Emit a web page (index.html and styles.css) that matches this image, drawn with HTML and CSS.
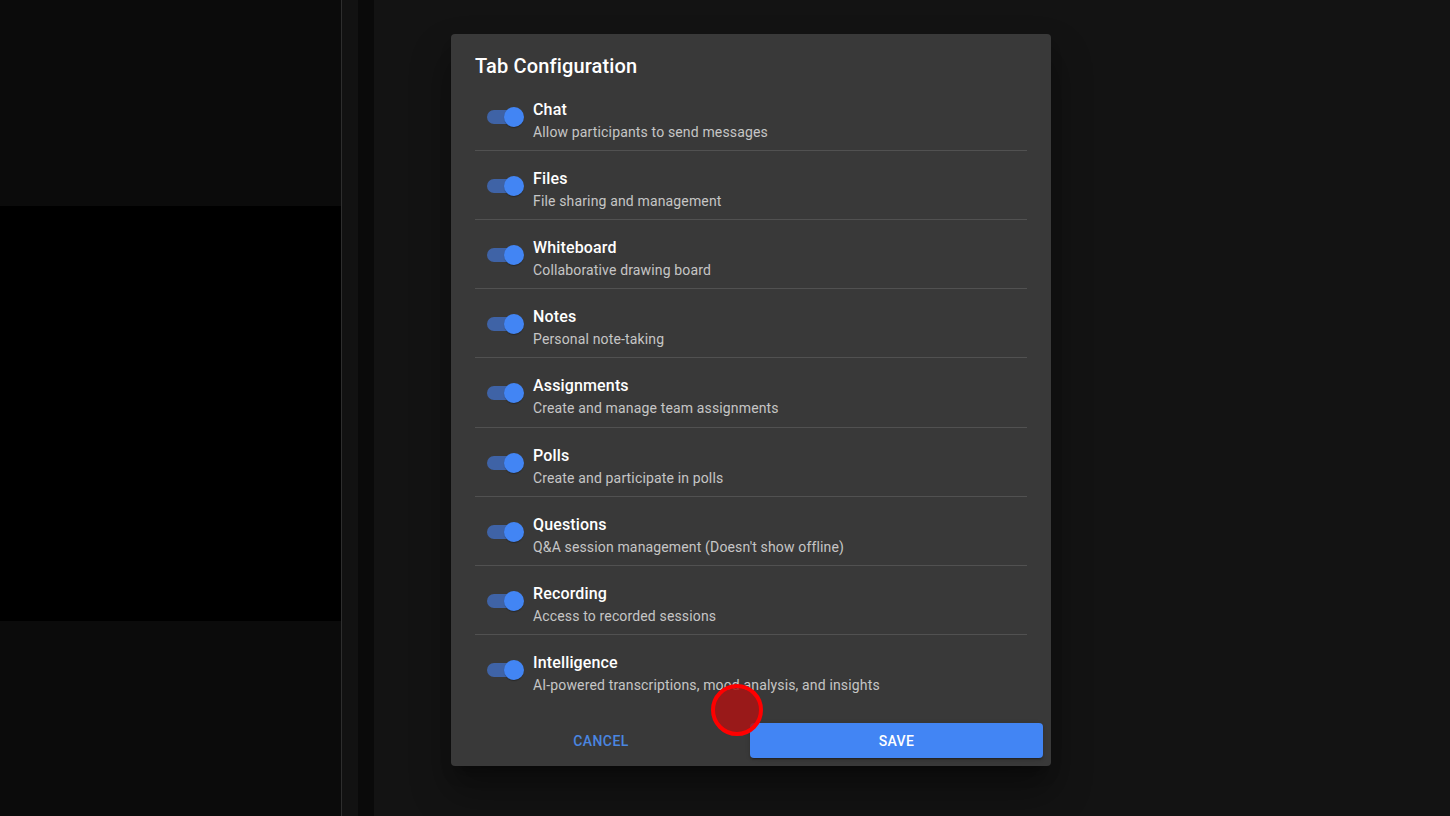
FILE: index.html
```html
<!DOCTYPE html>
<html>
<head>
<meta charset="utf-8">
<link rel="stylesheet" href="styles.css">
</head>
<body>
<div class="app">
  <aside class="side">
    <div class="side-top"></div>
    <div class="side-video"></div>
    <div class="side-bottom"></div>
  </aside>
  <div class="strip-a"></div>
  <div class="strip-b"></div>
  <main class="main"></main>
</div>

<div class="dialog">
  <h2 class="dialog-title">Tab Configuration</h2>
  <ul class="list">
    <li class="item"><span class="switch"><span class="track"></span><span class="thumb"></span></span><div class="text"><div class="name">Chat</div><div class="desc">Allow participants to send messages</div></div></li>
    <li class="item"><span class="switch"><span class="track"></span><span class="thumb"></span></span><div class="text"><div class="name">Files</div><div class="desc">File sharing and management</div></div></li>
    <li class="item"><span class="switch"><span class="track"></span><span class="thumb"></span></span><div class="text"><div class="name">Whiteboard</div><div class="desc">Collaborative drawing board</div></div></li>
    <li class="item"><span class="switch"><span class="track"></span><span class="thumb"></span></span><div class="text"><div class="name">Notes</div><div class="desc">Personal note-taking</div></div></li>
    <li class="item item-tall"><span class="switch"><span class="track"></span><span class="thumb"></span></span><div class="text"><div class="name">Assignments</div><div class="desc">Create and manage team assignments</div></div></li>
    <li class="item"><span class="switch"><span class="track"></span><span class="thumb"></span></span><div class="text"><div class="name">Polls</div><div class="desc">Create and participate in polls</div></div></li>
    <li class="item"><span class="switch"><span class="track"></span><span class="thumb"></span></span><div class="text"><div class="name">Questions</div><div class="desc">Q&amp;A session management (Doesn't show offline)</div></div></li>
    <li class="item"><span class="switch"><span class="track"></span><span class="thumb"></span></span><div class="text"><div class="name">Recording</div><div class="desc">Access to recorded sessions</div></div></li>
    <li class="item"><span class="switch"><span class="track"></span><span class="thumb"></span></span><div class="text"><div class="name">Intelligence</div><div class="desc">AI-powered transcriptions, mood analysis, and insights</div></div></li>
  </ul>
  <div class="actions">
    <button class="btn btn-cancel">Cancel</button>
    <button class="btn btn-save">Save</button>
  </div>
</div>

<div class="click-marker"></div>
</body>
</html>
```

FILE: styles.css
```css
* { box-sizing: border-box; }
html, body {
  margin: 0;
  padding: 0;
  width: 1450px;
  height: 816px;
  overflow: hidden;
  background: #121212;
  font-family: Roboto, "Noto Sans", "Liberation Sans", sans-serif;
}
.app {
  display: flex;
  height: 816px;
}
.side {
  width: 342px;
  display: flex;
  flex-direction: column;
  border-right: 1px solid #2e2e2e;
  background: #0b0b0b;
}
.side-top { height: 206px; background: #0b0b0b; }
.side-video { height: 415px; background: #000; }
.side-bottom { flex: 1; background: #0b0b0b; }
.strip-a { width: 16px; background: #121212; }
.strip-b { width: 16px; background: #0a0a0a; }
.main { flex: 1; background: #131313; }

.dialog {
  position: absolute;
  left: 451px;
  top: 34px;
  width: 600px;
  background: #393939;
  border-radius: 4px;
  box-shadow: 0 11px 15px -7px rgba(0,0,0,0.4), 0 24px 38px 3px rgba(0,0,0,0.3);
  display: flex;
  flex-direction: column;
}
.dialog-title {
  margin: 0;
  padding: 16px 24px 0;
  font-size: 20px;
  font-weight: 500;
  line-height: 32px;
  letter-spacing: 0.15px;
  color: #fff;
}
.list {
  list-style: none;
  margin: 0;
  padding: 0 24px 12px;
}
.item {
  display: flex;
  align-items: flex-start;
  padding: 16px 0 8px;
  border-bottom: 1px solid rgba(255,255,255,0.12);
}
.item-tall { padding-bottom: 9px; }
.item:last-child { border-bottom: none; }
.switch {
  position: relative;
  width: 58px;
  height: 38px;
  flex: none;
  margin-top: -1px;
}
.track {
  position: absolute;
  left: 12px;
  top: 13px;
  width: 34px;
  height: 14px;
  border-radius: 7px;
  background: #3f63a6;
}
.thumb {
  position: absolute;
  left: 29px;
  top: 10px;
  width: 20px;
  height: 20px;
  border-radius: 50%;
  background: #4285f4;
  box-shadow: 0 2px 1px -1px rgba(0,0,0,0.2), 0 1px 1px rgba(0,0,0,0.14);
}
.text { display: flex; flex-direction: column; }
.name {
  font-size: 16px;
  font-weight: 500;
  line-height: 24px;
  letter-spacing: 0.15px;
  color: #fff;
}
.desc {
  font-size: 14px;
  line-height: 20px;
  letter-spacing: 0.15px;
  color: rgba(255,255,255,0.72);
}
.actions {
  display: flex;
  padding: 8px;
  gap: 7px;
}
.btn {
  font-family: inherit;
  font-size: 14px;
  font-weight: 500;
  letter-spacing: 0.4px;
  text-transform: uppercase;
  height: 35px;
  border: none;
  border-radius: 4px;
  cursor: pointer;
}
.btn-cancel {
  width: 284px;
  background: transparent;
  color: #4a86e0;
}
.btn-save {
  width: 293px;
  background: #4285f4;
  color: #fff;
  box-shadow: 0 3px 1px -2px rgba(0,0,0,0.2), 0 2px 2px rgba(0,0,0,0.14), 0 1px 5px rgba(0,0,0,0.12);
}
.click-marker {
  position: absolute;
  left: 711px;
  top: 684px;
  width: 52px;
  height: 52px;
  border-radius: 50%;
  border: 4px solid #ff0000;
  background: rgba(170, 20, 20, 0.85);
}
```
